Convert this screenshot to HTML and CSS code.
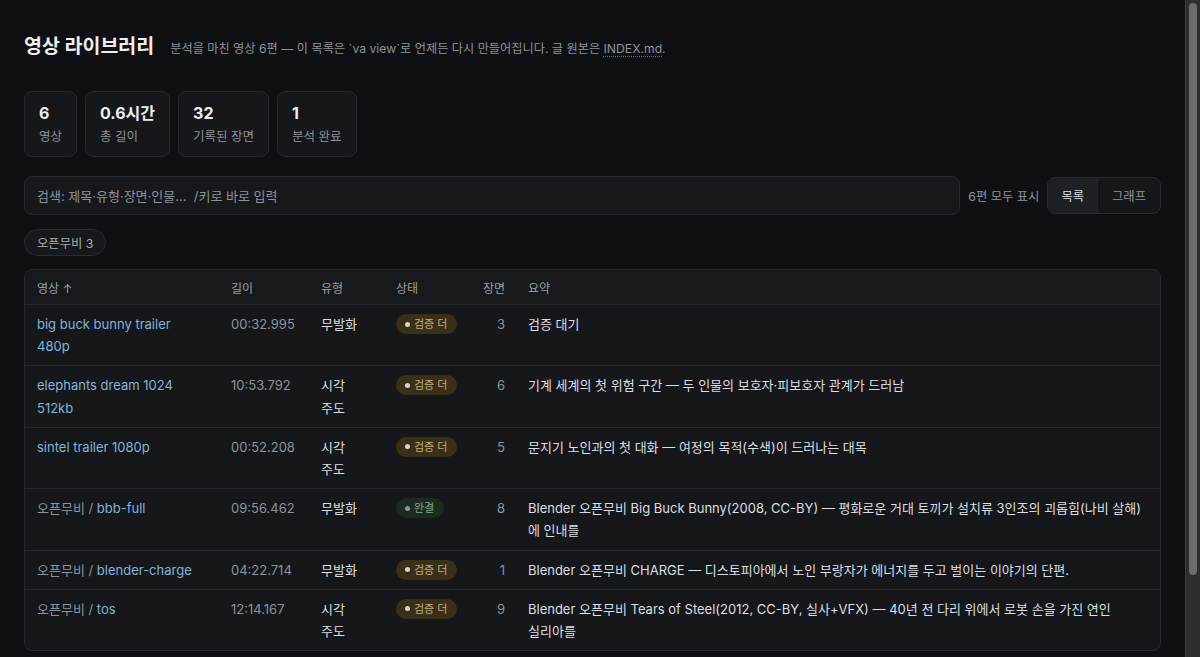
FILE: index.html
```html
<!DOCTYPE html>
<html lang="ko">
<head>
  <meta charset="UTF-8" />
  <title>영상 라이브러리</title>
  <link rel="stylesheet" href="styles.css">
</head>
<body>
  <main class="page">
    <!-- Title -->
    <header class="top">
      <h1>영상 라이브러리</h1>
      <p class="sub">분석을 마친 영상 6편 — 이 목록은 `va view`로 언제든 다시 만들어집니다. 글 원본은 <a href="INDEX.md">INDEX.md</a>.</p>
    </header>

    <!-- Stats -->
    <section class="stats">
      <div class="stat"><b>6</b><span>영상</span></div>
      <div class="stat"><b>0.6시간</b><span>총 길이</span></div>
      <div class="stat"><b>32</b><span>기록된 장면</span></div>
      <div class="stat"><b>1</b><span>분석 완료</span></div>
    </section>

    <!-- Search / view toggle -->
    <section class="toolbar">
      <input class="search" type="text" placeholder="검색: 제목·유형·장면·인물…  /키로 바로 입력">
      <span class="count">6편 모두 표시</span>
      <div class="toggle">
        <button class="on">목록</button>
        <button>그래프</button>
      </div>
    </section>

    <div class="chips">
      <button class="chip">오픈무비 3</button>
    </div>

    <!-- Video table -->
    <div class="table-wrap">
      <table>
        <colgroup>
          <col style="width:194px">
          <col style="width:90px">
          <col style="width:75px">
          <col style="width:87px">
          <col style="width:45px">
          <col>
        </colgroup>
        <thead>
          <tr>
            <th>영상 ↑</th>
            <th>길이</th>
            <th>유형</th>
            <th>상태</th>
            <th class="num">장면</th>
            <th>요약</th>
          </tr>
        </thead>
        <tbody>
          <tr>
            <td class="name"><a href="#">big buck bunny trailer 480p</a></td>
            <td class="time">00:32.995</td>
            <td>무발화</td>
            <td><span class="badge wait">검증 더</span></td>
            <td class="num">3</td>
            <td>검증 대기</td>
          </tr>
          <tr>
            <td class="name"><a href="#">elephants dream 1024 512kb</a></td>
            <td class="time">10:53.792</td>
            <td>시각<br>주도</td>
            <td><span class="badge wait">검증 더</span></td>
            <td class="num">6</td>
            <td>기계 세계의 첫 위험 구간 — 두 인물의 보호자·피보호자 관계가 드러남</td>
          </tr>
          <tr>
            <td class="name"><a href="#">sintel trailer 1080p</a></td>
            <td class="time">00:52.208</td>
            <td>시각<br>주도</td>
            <td><span class="badge wait">검증 더</span></td>
            <td class="num">5</td>
            <td>문지기 노인과의 첫 대화 — 여정의 목적(수색)이 드러나는 대목</td>
          </tr>
          <tr>
            <td class="name"><span class="folder">오픈무비 / </span><a href="#">bbb-full</a></td>
            <td class="time">09:56.462</td>
            <td>무발화</td>
            <td><span class="badge done">완결</span></td>
            <td class="num">8</td>
            <td>Blender 오픈무비 Big Buck Bunny(2008, CC-BY) — 평화로운 거대 토끼가 설치류 3인조의 괴롭힘(나비 살해)<br>에 인내를</td>
          </tr>
          <tr>
            <td class="name"><span class="folder">오픈무비 / </span><a href="#">blender-charge</a></td>
            <td class="time">04:22.714</td>
            <td>무발화</td>
            <td><span class="badge wait">검증 더</span></td>
            <td class="num">1</td>
            <td>Blender 오픈무비 CHARGE — 디스토피아에서 노인 부랑자가 에너지를 두고 벌이는 이야기의 단편.</td>
          </tr>
          <tr>
            <td class="name"><span class="folder">오픈무비 / </span><a href="#">tos</a></td>
            <td class="time">12:14.167</td>
            <td>시각<br>주도</td>
            <td><span class="badge wait">검증 더</span></td>
            <td class="num">9</td>
            <td>Blender 오픈무비 Tears of Steel(2012, CC-BY, 실사+VFX) — 40년 전 다리 위에서 로봇 손을 가진 연인<br>실리아를</td>
          </tr>
        </tbody>
      </table>
    </div>
  </main>

  <!-- page scrollbar -->
  <div class="scrollbar"><div class="thumb"></div></div>
</body>
</html>
```

FILE: styles.css
```css
html {
  color-scheme: dark;
}

body {
  font-family: Inter, "Noto Sans CJK KR", sans-serif;
  background: #0f1013;
  color: #dcdfe3;
  margin: 0;
  font-size: 13px;
}

.page {
  padding: 30px 39px 100px 24px;
}

.top {
  display: flex;
  align-items: baseline;
  gap: 16px;
}

.top h1 {
  margin: 0;
  font-size: 19.5px;
  font-weight: 700;
  color: #eceef0;
}

.sub {
  margin: 0;
  font-size: 12.2px;
  color: #8d939b;
}

.sub a {
  color: #8d939b;
  text-decoration: underline dotted #666;
  text-underline-offset: 3px;
}

.stats {
  display: flex;
  gap: 8px;
  margin-top: 32px;
}

.stat {
  display: flex;
  flex-direction: column;
  gap: 5px;
  padding: 12px 14px 11px;
  background: #15171a;
  border: 1px solid #24272c;
  border-radius: 8px;
}

.stat b {
  font-size: 16px;
  line-height: 19px;
  font-weight: 700;
  color: #eceef0;
}

.stat span {
  font-size: 12.5px;
  line-height: 17px;
  color: #8d939b;
}

.toolbar {
  display: flex;
  align-items: center;
  gap: 8px;
  margin-top: 19px;
}

.search {
  flex: 1;
  height: 39px;
  box-sizing: border-box;
  padding: 0 12px;
  background: #16181c;
  border: 1px solid #272a30;
  border-radius: 8px;
  color: #dcdfe3;
  font: inherit;
}

.search::placeholder {
  color: #8d939b;
}

.count {
  font-size: 12.3px;
  color: #8d939b;
}

.toggle {
  display: flex;
  border: 1px solid #272a30;
  border-radius: 8px;
  overflow: hidden;
  background: #15171a;
}

.toggle button {
  font: inherit;
  font-size: 12.3px;
  color: #8d939b;
  background: none;
  border: none;
  padding: 0 14px;
  height: 35px;
  cursor: pointer;
}

.toggle button + button {
  border-left: 1px solid #24272c;
}

.toggle button.on {
  background: #1d2024;
  color: #dcdfe3;
  padding: 0 13px;
}

.chips {
  margin-top: 14px;
}

.chip {
  font: inherit;
  font-size: 12.3px;
  color: #a9aeb5;
  background: #16181c;
  border: 1px solid #2a2d33;
  border-radius: 14px;
  padding: 0 12px;
  height: 27px;
}

.table-wrap {
  margin-top: 13px;
  border: 1px solid #24272c;
  border-radius: 8px;
  background: #15171b;
  overflow: hidden;
}

table {
  width: 100%;
  border-collapse: collapse;
  table-layout: fixed;
}

th {
  text-align: left;
  font-weight: 400;
  font-size: 12px;
  color: #9aa0a7;
  background: #17191d;
  padding: 0 12px;
  height: 34px;
  border-bottom: 1px solid #25282d;
}

td {
  vertical-align: top;
  padding: 8px 12px;
  line-height: 22.2px;
  border-bottom: 1px solid #25282d;
}

td.name {
  padding-right: 16px;
}

tbody tr:last-child td {
  border-bottom: none;
}

th.num,
td.num {
  text-align: right;
  padding: 8px 11px 8px 0;
}

th.num {
  padding: 0 11px 0 0;
}

td.num,
td.time {
  color: #8d939b;
}

td a {
  color: #86b3da;
  text-decoration: none;
}

.folder {
  color: #8d939b;
}

.badge {
  display: inline-flex;
  align-items: center;
  gap: 4px;
  height: 20px;
  padding: 0 10px 0 9px;
  border-radius: 10px;
  font-size: 11px;
  line-height: 20px;
  vertical-align: top;
  margin-top: 1px;
}

.badge::before {
  content: "";
  width: 5px;
  height: 5px;
  border-radius: 50%;
}

.badge.wait {
  background: #3a2f17;
  color: #c4ad82;
}

.badge.wait::before {
  background: #d8d4cb;
}

.badge.done {
  background: #1b2b20;
  color: #86a68f;
}

.badge.done::before {
  background: #8e978f;
}

.scrollbar {
  position: fixed;
  top: 0;
  right: 0;
  width: 15px;
  height: 100%;
  background: #2c2e30;
  border-left: 1px solid #3a3c3e;
  box-sizing: border-box;
}

.thumb {
  margin: 3px 0 0 3px;
  width: 8px;
  height: 572px;
  border-radius: 4px;
  background: #6c6c6c;
}
```
